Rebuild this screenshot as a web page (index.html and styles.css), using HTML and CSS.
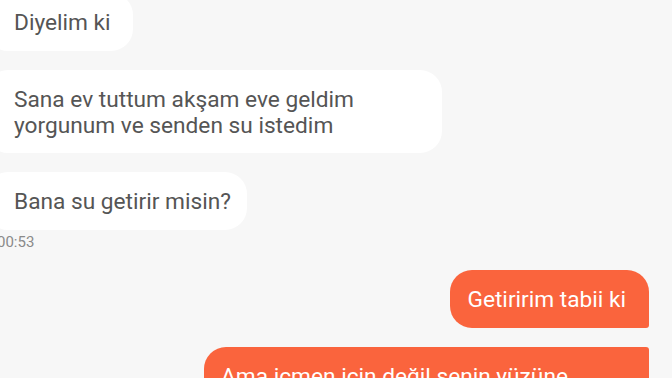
FILE: index.html
```html
<!DOCTYPE html>
<html lang="tr">
<head>
    <meta charset="UTF-8">
    <meta name="viewport" content="width=device-width, initial-scale=1.0">
    <title>Sohbet</title>
    <link rel="stylesheet" href="styles.css">
</head>
<body>
    <div class="chat_wrap">
        <div class="msg_list">
            <div class="msg in">Diyelim ki</div>
            <div class="msg in">Sana ev tuttum akşam eve geldim yorgunum ve senden su istedim</div>
            <div class="msg_group in">
                <div class="msg in">Bana su getirir misin?</div>
                <span class="msg_time">00:53</span>
            </div>
            <div class="msg_group out">
                <div class="msg out top">Getiririm tabii ki</div>
                <div class="msg out mid wide">Ama içmen için değil senin yüzüne</div>
            </div>
        </div>
    </div>
</body>
</html>
```

FILE: styles.css
```css
html, body {margin: 0; padding: 0;}
body {
    background-color: #f7f7f7;
    font-family: Roboto, "Noto Sans", sans-serif;
    overflow: hidden;
    height: 378px;
}

.chat_wrap {
    width: 672px;
    height: 378px;
    overflow: hidden;
}

.msg_list {
    display: flex;
    flex-direction: column;
    gap: 19px;
    margin-top: -7px;
}

.msg {
    font-size: 22.7px;
    line-height: 26px;
    padding: 17px 16px 14.5px;
    box-sizing: border-box;
    max-width: 456px;
    border-radius: 22px;
}

.msg.in {
    align-self: flex-start;
    background-color: #fff;
    color: #555;
    margin-left: -14px;
    padding-left: 28px;
    padding-right: 22px;
}

.msg_group {
    display: flex;
    flex-direction: column;
}

.msg_group.in {
    align-items: flex-start;
    gap: 3.5px;
}

.msg_group.in .msg.in {margin-left: -14px; padding-right: 16px;}

.msg_time {
    font-size: 15px;
    line-height: 18px;
    color: #8a8a8a;
    margin-left: -3px;
}

.msg_group.out {
    align-items: flex-end;
    gap: 19px;
    margin-right: 23px;
}

.msg.out {
    background-color: #fa643d;
    color: #fff;
    max-width: 445px;
    padding-left: 17px;
    padding-right: 23px;
}

.msg.out.wide {width: 445px;}

.msg.out.top {border-bottom-right-radius: 3px;}
.msg.out.mid {border-top-right-radius: 3px; border-bottom-right-radius: 3px;}
```
